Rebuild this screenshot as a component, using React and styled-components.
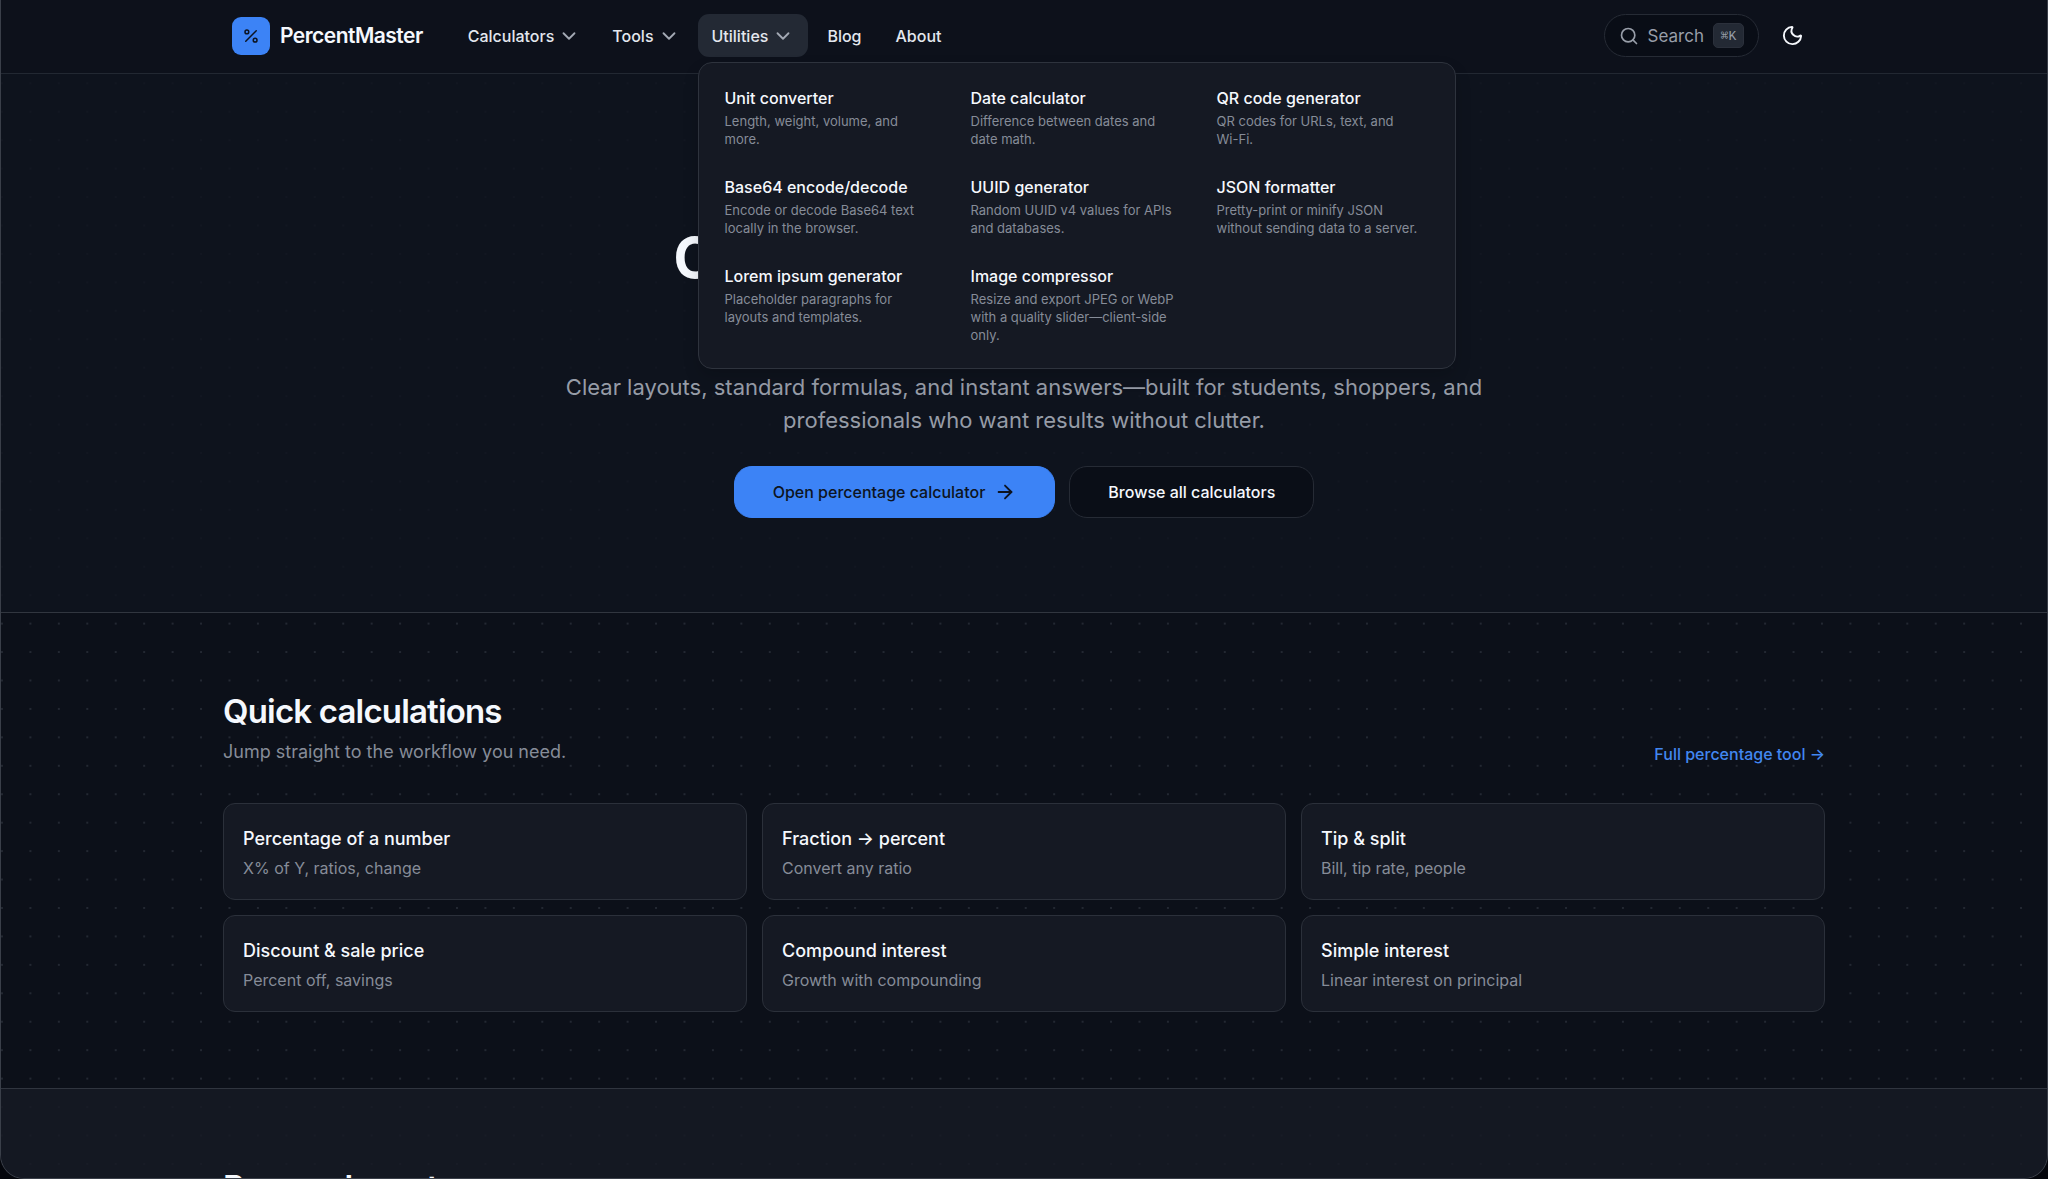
import React from "react";
import styled, { createGlobalStyle } from "styled-components";
import { ArrowRight, ChevronDown, Moon, Percent, Search } from "lucide-react";

const NoWrap = styled.span`
  white-space: nowrap;
`;

const menus = ["Calculators", "Tools", "Utilities"];

const utilities = [
  { name: "Unit converter", info: "Length, weight, volume, and more." },
  { name: "Date calculator", info: "Difference between dates and date math." },
  {
    name: "QR code generator",
    info: (
      <>
        QR codes for URLs, text, and <NoWrap>Wi-Fi.</NoWrap>
      </>
    ),
  },
  { name: "Base64 encode/decode", info: "Encode or decode Base64 text locally in the browser." },
  { name: "UUID generator", info: "Random UUID v4 values for APIs and databases." },
  { name: "JSON formatter", info: "Pretty-print or minify JSON without sending data to a server." },
  { name: "Lorem ipsum generator", info: "Placeholder paragraphs for layouts and templates." },
  { name: "Image compressor", info: "Resize and export JPEG or WebP with a quality slider—client-side only." },
];

const quick = [
  { name: "Percentage of a number", info: "X% of Y, ratios, change" },
  { name: "Fraction → percent", info: "Convert any ratio" },
  { name: "Tip & split", info: "Bill, tip rate, people" },
  { name: "Discount & sale price", info: "Percent off, savings" },
  { name: "Compound interest", info: "Growth with compounding" },
  { name: "Simple interest", info: "Linear interest on principal" },
];

const App = () => {
  return (
    <>
      <GlobalStyle />
      <Frame>
        <Header>
          <HeaderInner>
            <Brand href="#">
              <Logo>
                <Percent size={18} strokeWidth={2} />
              </Logo>
              PercentMaster
            </Brand>
            <Nav>
              {menus.map((name) => (
                <MenuHolder key={name}>
                  <MenuButton type="button" $open={name === "Utilities"}>
                    {name}
                    <ChevronDown size={22} strokeWidth={2} />
                  </MenuButton>
                  {name === "Utilities" && (
                    <Panel>
                      {utilities.map((item) => (
                        <PanelItem href="#" key={item.name}>
                          <PanelName>{item.name}</PanelName>
                          <PanelInfo>{item.info}</PanelInfo>
                        </PanelItem>
                      ))}
                    </Panel>
                  )}
                </MenuHolder>
              ))}
              <NavItem href="#">Blog</NavItem>
              <NavItem href="#">About</NavItem>
            </Nav>
            <SearchButton type="button">
              <Search size={20} strokeWidth={2} />
              Search
              <Kbd>⌘K</Kbd>
            </SearchButton>
            <ThemeButton type="button" aria-label="Theme">
              <Moon size={23} strokeWidth={2} />
            </ThemeButton>
          </HeaderInner>
        </Header>

        <Hero>
          <HeroTitle>Calculators for everything</HeroTitle>
          <HeroText>
            Clear layouts, standard formulas, and instant answers—built for students, shoppers, and
            professionals who want results without clutter.
          </HeroText>
          <Actions>
            <Action href="#" $primary>
              Open percentage calculator
              <ArrowRight size={22} strokeWidth={2} />
            </Action>
            <Action href="#">Browse all calculators</Action>
          </Actions>
        </Hero>

        <QuickSection>
          <Container>
            <SectionHead>
              <div>
                <SectionTitle>Quick calculations</SectionTitle>
                <SectionText>Jump straight to the workflow you need.</SectionText>
              </div>
              <MoreLink href="#">Full percentage tool →</MoreLink>
            </SectionHead>
            <Cards>
              {quick.map((item) => (
                <Card href="#" key={item.name}>
                  <CardName>{item.name}</CardName>
                  <CardInfo>{item.info}</CardInfo>
                </Card>
              ))}
            </Cards>
          </Container>
        </QuickSection>

        <BrowseSection>
          <Container>
            <SectionTitle>Browse by category</SectionTitle>
          </Container>
        </BrowseSection>
      </Frame>
    </>
  );
};

const GlobalStyle = createGlobalStyle`
  * {
    box-sizing: border-box;
  }
  body {
    margin: 0;
    background: #04060c;
    color: #f5f8fd;
    font-family: Inter, "Liberation Sans", sans-serif;
    font-size: 16px;
    -webkit-font-smoothing: antialiased;
  }
  h1, h2, p {
    margin: 0;
  }
  a {
    color: inherit;
    text-decoration: none;
  }
  button {
    font: inherit;
    cursor: pointer;
  }
`;

const Frame = styled.div`
  height: 100vh;
  overflow: hidden;
  border: 1px solid #3a3f49;
  border-top: none;
  border-radius: 0 0 24px 24px;
  background-color: #0c1019;
  background-image: radial-gradient(circle at 1px 1px, #232832 1px, transparent 1px);
  background-size: calc(100vw / 72) calc(100vw / 72);
  background-position: 0 -3px;
`;

const Container = styled.div`
  max-width: 1602px;
  margin: 0 auto;
`;

const Header = styled.header`
  position: relative;
  z-index: 2;
  background: #0d111b;
  border-bottom: 1px solid #222832;
`;

const HeaderInner = styled(Container)`
  display: flex;
  align-items: center;
  height: 73px;
  padding: 0 9px 2px;
`;

const Brand = styled.a`
  display: flex;
  align-items: center;
  gap: 10px;
  font-size: 21px;
  font-weight: 600;
  letter-spacing: -0.025em;
`;

const Logo = styled.span`
  display: grid;
  place-items: center;
  width: 38px;
  height: 38px;
  border-radius: 9px;
  background: #3c83f6;
  color: #0d1421;
`;

const Nav = styled.nav`
  display: flex;
  flex: 1;
  gap: 4px;
  margin-left: 31px;
`;

const MenuHolder = styled.div`
  position: relative;
`;

const NavItem = styled.a`
  display: flex;
  align-items: center;
  height: 43px;
  padding: 0 15px;
  border-radius: 11px;
  color: #e3e7ee;
  font-size: 16px;
  font-weight: 500;
`;

const MenuButton = styled(NavItem).attrs({ as: "button" })`
  gap: 4px;
  padding: 0 14px;
  border: none;
  background: ${(props) => (props.$open ? "#232934" : "transparent")};

  svg {
    color: #a3a9b4;
  }
`;

const Panel = styled.div`
  position: absolute;
  top: 48px;
  left: 0;
  display: grid;
  grid-template-columns: repeat(3, 1fr);
  gap: 6px;
  width: 758px;
  padding: 12px 12px 14px;
  border: 1px solid #2e333d;
  border-radius: 14px;
  background: #151923;
  box-shadow: 0 8px 16px rgba(0, 0, 0, 0.15);
`;

const PanelItem = styled.a`
  display: flex;
  flex-direction: column;
  gap: 2px;
  padding: 11px 14px 10px;
`;

const PanelName = styled.span`
  font-size: 16px;
  font-weight: 500;
  line-height: 24px;
`;

const PanelInfo = styled.span`
  color: #868c98;
  font-size: 13px;
  line-height: 18px;
`;

const SearchButton = styled.button`
  display: flex;
  align-items: center;
  gap: 9px;
  height: 43px;
  padding: 0 14px;
  border: 1px solid #262b35;
  border-radius: 22px;
  background: #090d16;
  color: #989ea9;
  font-size: 17px;
`;

const Kbd = styled.kbd`
  display: grid;
  place-items: center;
  width: 31px;
  height: 25px;
  border: 1px solid #2b303b;
  border-radius: 5px;
  background: #232934;
  font-family: "Liberation Mono", "DejaVu Sans Mono", monospace;
  font-size: 13px;
`;

const ThemeButton = styled.button`
  display: grid;
  place-items: center;
  width: 48px;
  height: 43px;
  margin-left: 9px;
  padding: 0;
  border: none;
  background: transparent;
  color: #f5f8fd;
`;

const Hero = styled.section`
  padding: 152px 0 94px;
  border-bottom: 1px solid #31363f;
  background: rgba(15, 20, 31, 0.85);
  text-align: center;
`;

const HeroTitle = styled.h1`
  font-size: 56px;
  font-weight: 700;
  line-height: 64px;
  letter-spacing: -0.01em;
`;

const HeroText = styled.p`
  max-width: 956px;
  margin: 81px auto 29px;
  color: #969ca7;
  font-size: 22px;
  line-height: 33px;
`;

const Actions = styled.div`
  display: flex;
  justify-content: center;
  gap: 14px;
`;

const Action = styled.a`
  display: flex;
  align-items: center;
  gap: 9px;
  height: 52px;
  padding: 0 38px;
  border: 1px solid ${(props) => (props.$primary ? "#3c83f6" : "#262b35")};
  border-radius: 18px;
  background: ${(props) => (props.$primary ? "#3c83f6" : "#0a0e17")};
  color: ${(props) => (props.$primary ? "#0d1421" : "#f5f8fd")};
  font-weight: 500;
`;

const QuickSection = styled.section`
  padding: 76px 0;
`;

const SectionHead = styled.div`
  display: flex;
  align-items: flex-end;
  justify-content: space-between;
  margin-bottom: 37px;
`;

const SectionTitle = styled.h2`
  font-size: 33px;
  font-weight: 600;
  line-height: 44px;
  letter-spacing: -0.025em;
`;

const SectionText = styled.p`
  margin-top: 5px;
  color: #868c98;
  font-size: 18px;
  line-height: 28px;
`;

const MoreLink = styled.a`
  color: #4287f0;
  font-weight: 500;
  line-height: 24px;
`;

const Cards = styled.div`
  display: grid;
  grid-template-columns: repeat(3, 1fr);
  gap: 15px;
`;

const Card = styled.a`
  display: flex;
  flex-direction: column;
  gap: 3px;
  padding: 21px 19px 19px;
  border: 1px solid #2b303a;
  border-radius: 12px;
  background: #151923;
`;

const CardName = styled.span`
  font-size: 18px;
  font-weight: 500;
  line-height: 28px;
`;

const CardInfo = styled.span`
  color: #868c98;
  font-size: 16px;
  line-height: 24px;
`;

const BrowseSection = styled.section`
  padding: 76px 0;
  border-top: 1px solid #30353f;
  background: rgba(22, 26, 36, 0.85);
`;

export default App;
